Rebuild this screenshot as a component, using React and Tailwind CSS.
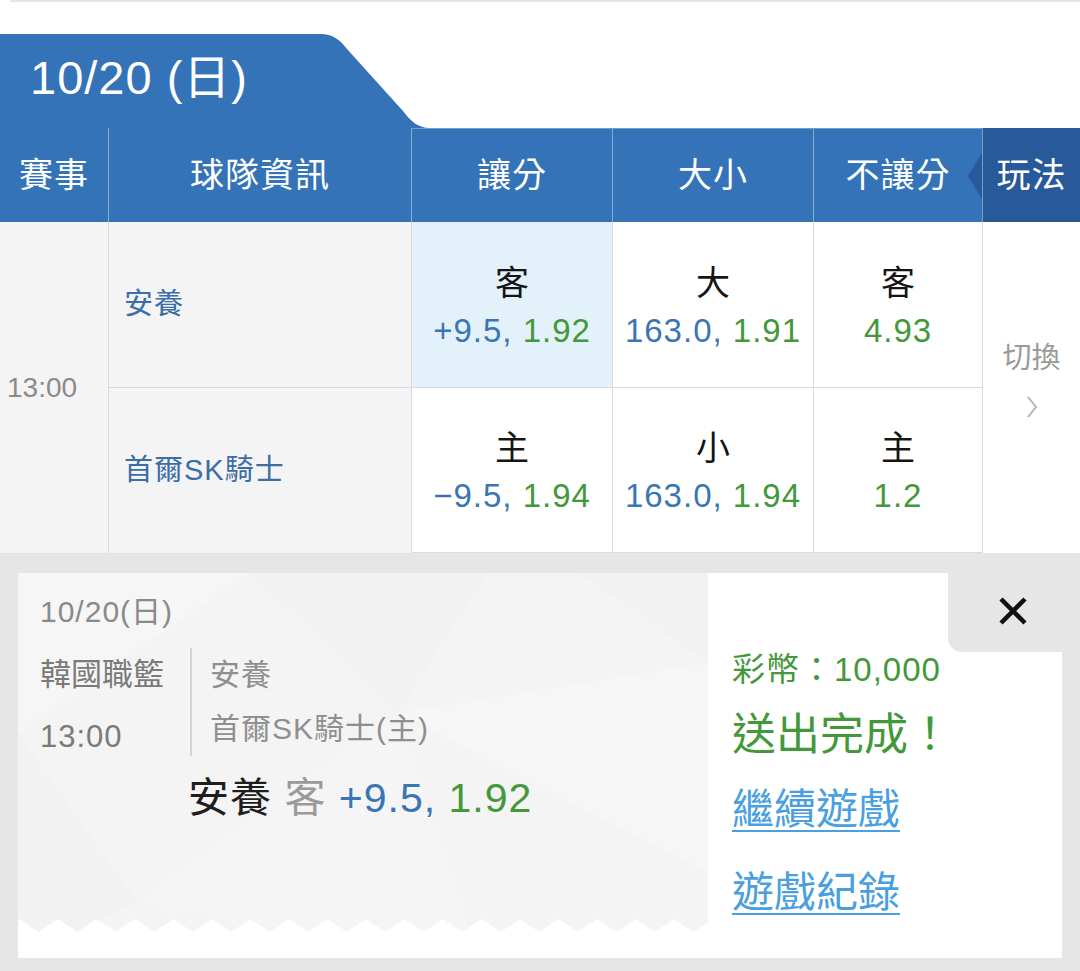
import React from 'react';

const cols = 'grid grid-cols-[108px_303px_201px_201px_169px_98px]';

function Odds({ side, line, price, hl }) {
    return (
        <div className={`border-l border-b border-[#d6dce3] flex flex-col items-center justify-center pt-[4px] ${hl ? 'bg-[#e3f1fb]' : 'bg-white'}`}>
            <div className="text-[34px] leading-[48px] text-[#151515]">{side}</div>
            <div className="text-[33px] leading-[48px] tracking-[1px]">
                {line && <span className="text-[#3b76b4]">{line}, </span>}
                <span className="text-[#43983a]">{price}</span>
            </div>
        </div>
    );
}

function Pattern() {
    // zigzag edge at the foot of the ticket
    let zig = 'M0 385 L0 352';
    for (let k = -1; k < 19; k++) {
        const peak = 40 + 38.5 * k;
        zig += ` L${peak - 19.25} 359 L${peak} 346`;
    }
    zig += ' L690 359 L690 385 Z';
    return (
        <svg className="absolute inset-0" width="690" height="385" viewBox="0 0 690 385">
            <rect width="690" height="385" fill="#f4f4f4" />
            <polygon points="0,0 230,0 0,160" fill="#f6f6f6" />
            <polygon points="230,0 470,0 380,140" fill="#f2f2f2" />
            <polygon points="0,160 120,330 0,385" fill="#f2f2f2" />
            <polygon points="380,140 690,90 690,300" fill="#f6f6f6" />
            <polygon points="120,330 380,140 460,385" fill="#f5f5f5" />
            <polygon points="560,0 690,0 690,90" fill="#f2f2f2" />
            <path d={zig} fill="#ffffff" />
        </svg>
    );
}

export default function App() {
    return (
        <div className="w-[1080px] h-[971px] bg-white overflow-hidden font-['Liberation_Sans','Noto_Sans_CJK_TC',sans-serif]">
            <div className="h-[2px] ml-[10px] bg-[#e6e6e6]" />
            <div className="h-[32px]" />

            {/* date tab */}
            <div className="flex h-[94px]">
                <div className="w-[300px] bg-[#3473b7] text-white text-[47px] leading-none tracking-[1px] pl-[30px] pb-[8px] flex items-center">
                    10/20 (日)
                </div>
                <svg width="140" height="94" viewBox="0 0 140 94">
                    <path d="M0 0 H20 C33 0 40 6 47 15 L103 77 C110 86 117 94 130 94 H140 V94 H0 Z" fill="#3473b7" />
                </svg>
            </div>

            {/* header row */}
            <div className={`${cols} h-[94px] bg-[#3473b7] text-white text-[34px] tracking-[1px]`}>
                <div className="flex items-center justify-center">賽事</div>
                <div className="flex items-center justify-center border-l border-white/40">球隊資訊</div>
                <div className="flex items-center justify-center border-l border-white/40 border-t border-t-white/30">讓分</div>
                <div className="flex items-center justify-center border-l border-white/40 border-t border-t-white/30">大小</div>
                <div className="flex items-center justify-center border-l border-white/40 border-t border-t-white/30">不讓分</div>
                <div className="relative flex items-center justify-center border-l border-white/40 bg-[#28599a]">
                    <span className="absolute left-[-15px] top-[25px] w-0 h-0 border-y-[23px] border-y-transparent border-r-[14px] border-r-[#28599a]" />
                    玩法
                </div>
            </div>

            {/* match rows */}
            <div className={`${cols} grid-rows-[166px_165px]`}>
                <div className="row-span-2 bg-[#f4f4f4] flex items-center pl-[7px] text-[28px] text-[#8b8b8b]">13:00</div>
                <div className="bg-[#f4f4f4] border-l border-b border-[#d6dce3] flex items-center pl-[15px] text-[29px] tracking-[1px] text-[#3b6da6]">安養</div>
                <Odds side="客" line="+9.5" price="1.92" hl />
                <Odds side="大" line="163.0" price="1.91" />
                <Odds side="客" price="4.93" />
                <div className="row-span-2 border-l border-[#d6dce3] bg-white flex flex-col items-center justify-center text-[29px] text-[#9a9a9a] pb-[18px]">
                    <div className="leading-[40px]">切換</div>
                    <svg width="14" height="26" viewBox="0 0 14 26" className="mt-[16px]">
                        <polyline points="3,3 11,13 3,23" fill="none" stroke="#b5b5b5" strokeWidth="2" />
                    </svg>
                </div>
                <div className="bg-[#f4f4f4] border-l border-[#d6dce3] flex items-center pl-[15px] text-[29px] tracking-[1px] text-[#3b6da6]">首爾SK騎士</div>
                <Odds side="主" line="−9.5" price="1.94" />
                <Odds side="小" line="163.0" price="1.94" />
                <Odds side="主" price="1.2" />
            </div>

            {/* result ticket */}
            <div className="bg-[#e6e6e6] pt-[20px] px-[18px] pb-[13px] h-[418px]">
                <div className="flex h-[385px] bg-white">
                    <div className="relative w-[690px]">
                        <Pattern />
                        <div className="relative pl-[22px] pt-[20px]">
                            <div className="text-[30px] leading-[38px] tracking-[1px] text-[#8a8a8a]">10/20(日)</div>
                            <div className="flex items-start mt-[17px]">
                                <div className="w-[150px] text-[31px] text-[#7a7a7a]">
                                    <div className="leading-[54px]">韓國職籃</div>
                                    <div className="leading-[54px] mt-[8px] tracking-[1px]">13:00</div>
                                </div>
                                <div className="border-l-2 border-[#d4d4d4] pl-[18px] text-[30px] tracking-[1px] text-[#8f8f8f]">
                                    <div className="leading-[54px]">安養</div>
                                    <div className="leading-[54px]">首爾SK騎士(主)</div>
                                </div>
                            </div>
                            <div className="pl-[148px] mt-[10px] text-[41px] leading-[48px] tracking-[1px]">
                                <span className="text-[#1e1e1e]">安養 </span>
                                <span className="text-[#9a9a9a]">客 </span>
                                <span className="text-[#3b76b4]">+9.5, </span>
                                <span className="text-[#43983a]">1.92</span>
                            </div>
                        </div>
                    </div>
                    <div className="relative flex-1 pl-[24px] pt-[77px]">
                        <div className="absolute top-0 right-0 w-[114px] h-[79px] bg-[#e6e6e6] rounded-bl-[14px] flex items-center justify-center pl-[16px] pb-[4px]">
                            <svg width="30" height="30" viewBox="0 0 30 30">
                                <path d="M3 3 L27 27 M27 3 L3 27" stroke="#111" strokeWidth="4.5" />
                            </svg>
                        </div>
                        <div className="text-[33px] leading-[40px] tracking-[1px] text-[#43983a]">彩幣：10,000</div>
                        <div className="text-[44px] leading-[56px] mt-[17px] text-[#43983a]">送出完成！</div>
                        <div className="text-[42px] leading-[52px] mt-[21px] text-[#4a9fe0] underline decoration-2 underline-offset-[6px]">繼續遊戲</div>
                        <div className="text-[42px] leading-[52px] mt-[31px] text-[#4a9fe0] underline decoration-2 underline-offset-[6px]">遊戲紀錄</div>
                    </div>
                </div>
            </div>
        </div>
    );
}
